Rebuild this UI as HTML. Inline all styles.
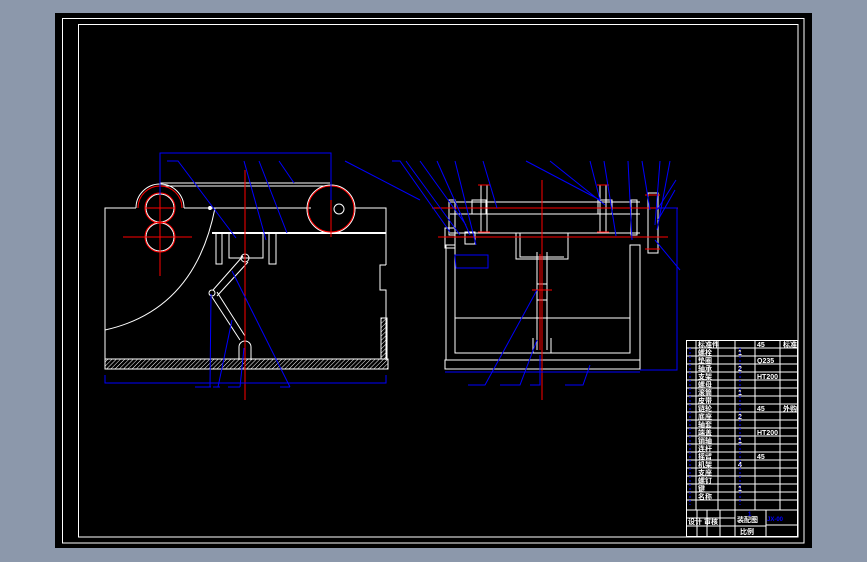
<!DOCTYPE html>
<html><head><meta charset="utf-8"><style>
html,body{margin:0;padding:0;width:867px;height:562px;overflow:hidden;background:#8c98ab;}
svg{display:block}
</style></head><body>
<svg width="867" height="562" viewBox="0 0 867 562" xmlns="http://www.w3.org/2000/svg" font-family="Liberation Sans, 'Noto Sans CJK SC', sans-serif">
<rect x="0" y="0" width="867" height="562" fill="#8c98ab"/>
<rect x="55" y="13" width="757" height="535" fill="#000"/>
<rect x="62.5" y="18.5" width="741.5" height="524.5" fill="none" stroke="#fff" stroke-width="1"/>
<rect x="78.5" y="24.5" width="719.5" height="512.5" fill="none" stroke="#fff" stroke-width="1"/>

<defs>
<pattern id="h" width="3" height="3" patternUnits="userSpaceOnUse" patternTransform="rotate(45)">
<line x1="0" y1="0" x2="0" y2="3" stroke="#fff" stroke-width="1"/>
</pattern>
</defs>

<!-- LEFT VIEW -->
<g fill="none" stroke="#fff" stroke-width="1">
<path d="M105 360 V208 H136 M184 208 H311 M354 208 H386 V265"/>
<path d="M386 265 H380 V290 H386 V360"/>
<rect x="105" y="359" width="283" height="10" fill="url(#h)"/>
<rect x="381" y="318" width="6" height="41" fill="url(#h)"/>
<path d="M136 208 A24 24 0 0 1 184 208"/>
<path d="M160 183 H330 M160 186 H330"/>
<path d="M212 233 H386" stroke-width="2"/>
<path d="M215 208 Q195 310 105 330"/>
<path d="M216 233 V264 H222 V233 M229 233 V258 H263 V233 M269 233 V264 H276 V233"/>
<path d="M243 256 L213 290 M248 262 L217 296 M212 297 L240 340 M217 292 L245 336"/>
<circle cx="245" cy="258" r="4"/><circle cx="212" cy="293" r="3"/>
<path d="M239 360 V347 A6 6 0 0 1 251 347 V360"/>
<circle cx="331" cy="209" r="24"/><circle cx="339" cy="209" r="5"/>
<circle cx="160" cy="208" r="14"/><circle cx="160" cy="237" r="14"/>
</g>
<g fill="none" stroke="#f00" stroke-width="1">
<circle cx="160" cy="208" r="15"/><circle cx="160" cy="237" r="15"/>
<circle cx="331" cy="209" r="23"/>
<path d="M138 208 A22 22 0 0 1 182 208"/>
<path d="M160 155 V276 M123 237 H192 M145 208 H175 M331 155 V237 M245 170 V400"/>
</g>
<g fill="none" stroke="#00f" stroke-width="1">
<path d="M160 195 V153 H331 V200 M105 375 V383 H386 V375"/>
<path d="M167 161 H178 L236 238 M244 161 L266 240 M259 161 L287 233 M279 161 L294 183 M345 161 L420 200"/>
<path d="M210 387 L211 294 M218 387 L232 320 M290 387 L232 271 M240 387 L244 348"/>
<path d="M195 387 H211 M213 387 H220 M280 387 H290 M228 387 H240"/>
</g>
<circle cx="210" cy="208" r="2" fill="#fff"/>

<!-- RIGHT VIEW -->
<g fill="none" stroke="#fff" stroke-width="1">
<path d="M446 360 V245 H455 V353 H630 V245 H640 V360"/>
<rect x="445" y="360" width="195" height="9"/>
<path d="M450 202 H640 M450 214 H640 M450 233 H640 M450 237 H640"/>
<path d="M516 233 V259 H568 V233 M520 233 V257 H564"/>
<path d="M455 318 H630"/>
<path d="M537 252 V350 M547 252 V350 M533 338 V353 M551 338 V353"/>
<path d="M481 185 V232 M487 185 V232 M600 185 V232 M606 185 V232"/>
<rect x="472" y="200" width="14" height="14"/><rect x="598" y="200" width="14" height="14"/>
<rect x="449" y="200" width="6" height="35"/><rect x="631" y="200" width="6" height="35"/>
<rect x="648" y="193" width="10" height="60"/>
<rect x="445" y="228" width="10" height="20"/><rect x="465" y="232" width="10" height="12"/>
<rect x="537" y="284" width="10" height="16"/>
</g>
<g fill="none" stroke="#f00" stroke-width="1">
<path d="M432 208 H678 M438 237 H668 M542 180 V400 M540 254 V350 M532 290 H552"/>
<path d="M478 185 H490 M478 232 H490 M597 185 H609 M597 232 H609 M645 195 H660 M645 249 H660"/>
</g>
<g fill="none" stroke="#00f" stroke-width="1">
<path d="M658 208 H677 V370 H640 M445 372 H640"/>
<path d="M392 161 H400 L450 232 M406 161 L460 235 M420 161 L466 225 M437 161 L470 235 M455 161 L476 245 M483 161 L497 208"/>
<path d="M526 161 L600 200 M550 161 L605 205 M590 161 L600 200 M604 161 L616 236 M628 161 L632 240 M642 161 L650 210 M660 161 L655 225 M670 161 L657 230"/>
<path d="M675 190 L658 220 M676 180 L657 210 M655 240 L680 270"/>
<path d="M455 255 H488 V268 H456 Z"/>
<path d="M468 385 H485 L537 290 M500 385 H520 L537 340 M530 385 H540 V355 M565 385 H583 L590 365"/>
</g>

<!-- TITLE BLOCK -->
<g fill="none" stroke="#fff" stroke-width="1">
<rect x="686.5" y="340.5" width="111" height="196"/>
<path d="M696 340 V510 M718 340 V510 M735 340 V510 M755 340 V510 M780 340 V510"/>
<path d="M686 348 H798 M686 356 H798 M686 364 H798 M686 372 H798 M686 380 H798 M686 388 H798 M686 396 H798 M686 404 H798 M686 412 H798 M686 420 H798 M686 428 H798 M686 436 H798 M686 444 H798 M686 452 H798 M686 460 H798 M686 468 H798 M686 476 H798 M686 484 H798 M686 492 H798 M686 500 H798 M686 510 H798"/>
<path d="M686 518 H735 M686 526 H735 M735 510 V537 M766 510 V537 M766 525 H798 M735 526 H766 M697 510 V537 M707 510 V537 M720 510 V537"/>
</g>
<g fill="#fff" font-size="7" font-weight="bold">
<text x="698" y="347">标准件</text><text x="698" y="355">螺栓</text><text x="698" y="363">垫圈</text><text x="698" y="371">轴承</text><text x="698" y="379">支架</text>
<text x="698" y="387">螺母</text><text x="698" y="395">滚筒</text><text x="698" y="403">皮带</text><text x="698" y="411">链轮</text><text x="698" y="419">底座</text>
<text x="698" y="427">轴套</text><text x="698" y="435">端盖</text><text x="698" y="443">销轴</text><text x="698" y="451">连杆</text><text x="698" y="459">摇臂</text>
<text x="698" y="467">机架</text><text x="698" y="475">支座</text><text x="698" y="483">螺钉</text><text x="698" y="491">键</text><text x="698" y="499">名称</text>
<text x="738" y="355">1</text><text x="738" y="371">2</text><text x="738" y="395">1</text><text x="738" y="419">2</text><text x="738" y="443">1</text><text x="738" y="467">4</text><text x="738" y="491">1</text>
<text x="757" y="347">45</text><text x="757" y="363">Q235</text><text x="757" y="379">HT200</text><text x="757" y="411">45</text><text x="757" y="435">HT200</text><text x="757" y="459">45</text>
<text x="783" y="347">标准</text><text x="783" y="411">外购</text>
<text x="688" y="524">设计 审核</text><text x="737" y="522">装配图</text><text x="740" y="534">比例</text>
</g>
<g fill="#00f" font-size="6" font-weight="bold">
<text x="767" y="521">JX-00</text><text x="748" y="516">1</text>
</g>
<path d="M690 348 V505 M740 348 V505" stroke="#00f" stroke-dasharray="2 2" stroke-width="1"/>
</svg>
</body></html>
